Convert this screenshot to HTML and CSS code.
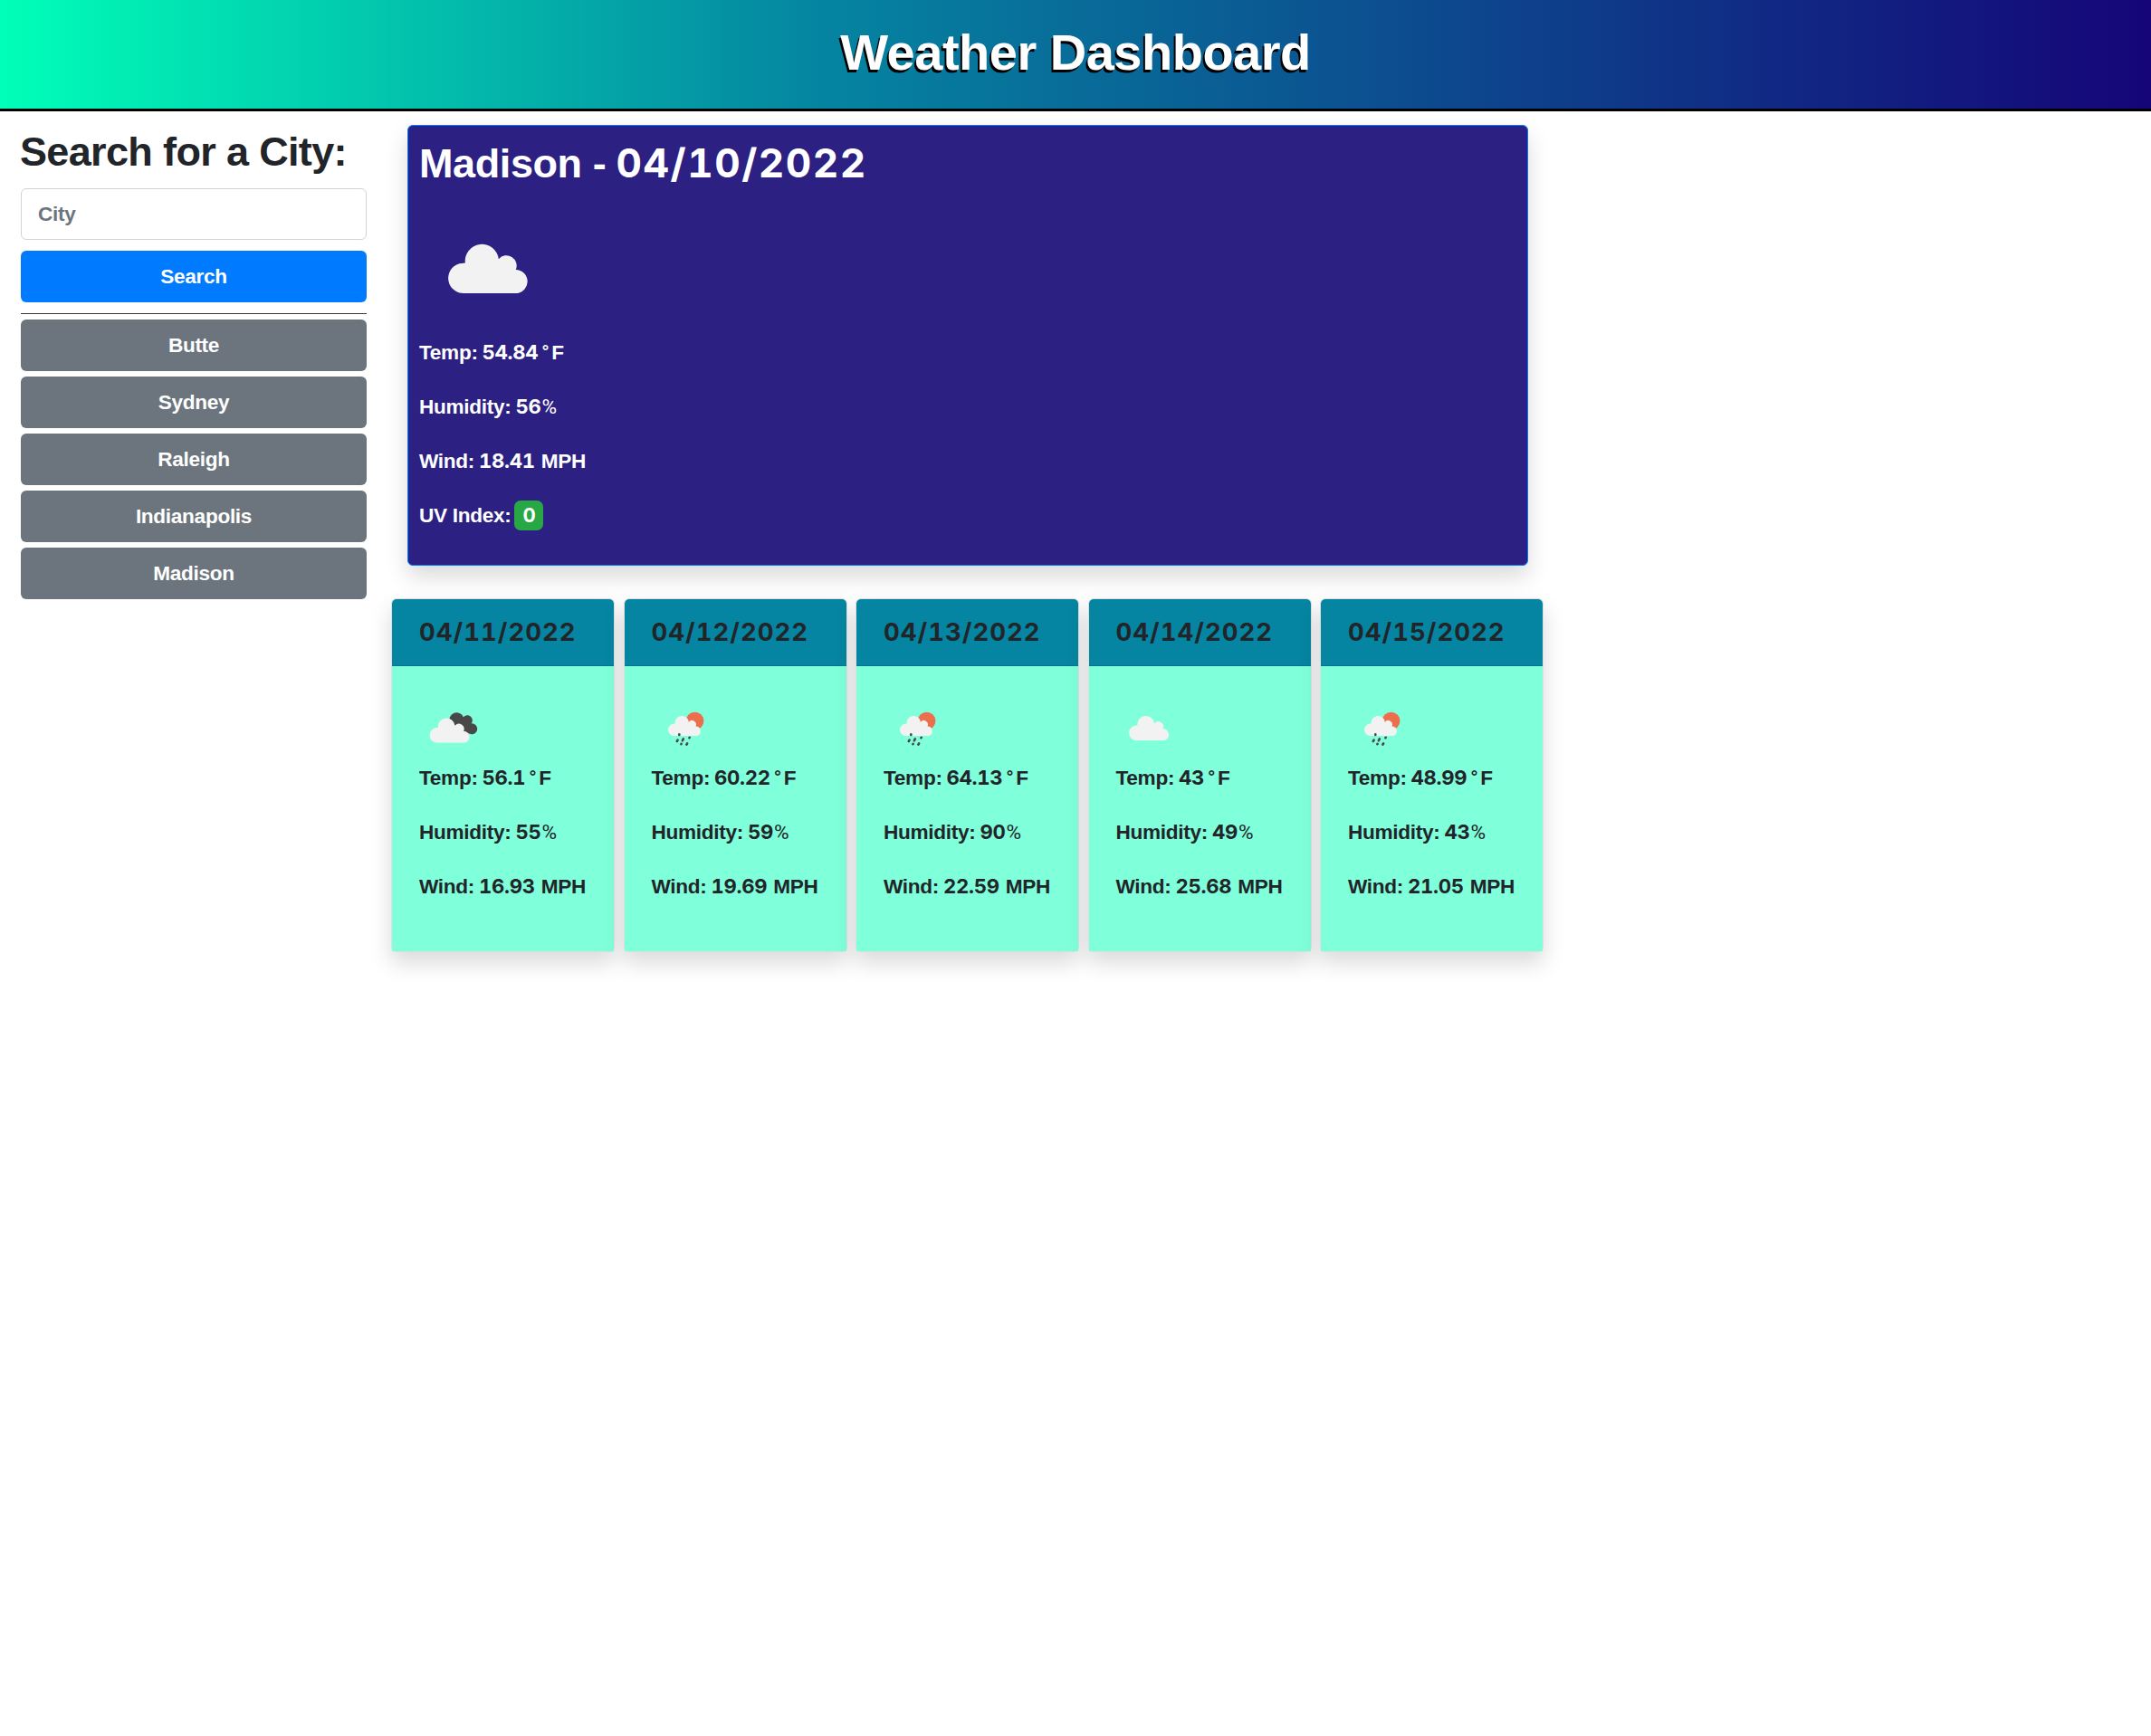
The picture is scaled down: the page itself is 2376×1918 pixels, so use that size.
FILE: index.html
```html
<!DOCTYPE html>
<html lang="en">
<head>
<meta charset="utf-8">
<title>Weather Dashboard</title>
<link rel="stylesheet" href="styles.css">
</head>
<body>
<svg class="defs" width="0" height="0" aria-hidden="true">
  <symbol id="cloud" viewBox="0 0 89 55.5">
    <path d="M16.5 55.5A16.5 16.5 0 0 1 16.5 22.5L18.6 22.4A18.4 18.4 0 1 1 55.2 18A11.2 11.2 0 0 1 74 29.7A13 13 0 0 1 76 55.5Z"/>
  </symbol>
  <symbol id="broken" viewBox="0 0 75 75">
    <path fill="#484848" d="M34 31A7.6 7.6 0 0 1 48.8 25.3A5.4 5.4 0 0 1 57.6 32.4A5.9 5.9 0 1 1 57 44L50 42Z"/>
    <use href="#cloud" x="11.5" y="25.6" width="45.3" height="28.2"/>
  </symbol>
  <symbol id="rain" viewBox="0 0 75 75">
    <circle cx="47.6" cy="29.5" r="9.8" fill="#ec6e4c"/>
    <path d="M54 40h8v-4h-4z" fill="#80ffdb"/>
    <use href="#cloud" x="18" y="23.2" width="36.8" height="22.9"/>
    <g stroke="#484848" stroke-width="2.6" stroke-linecap="round">
      <path d="M30.3 44.4v.6M28.6 50.6l-.8 1.4M34.8 49.4l-.9 1.9M41.7 47.8l-.3.4M32.6 54.8l-.2.3M39.1 54.3l-.7 1.4"/>
    </g>
  </symbol>
</svg>
<header class="banner"><h1>Weather Dashboard</h1></header>
<div class="layout">
  <aside class="sidebar">
    <h2>Search for a City:</h2>
    <input class="field" type="text" placeholder="City">
    <button class="btn primary">Search</button>
    <div class="history">
      <button class="btn">Butte</button>
      <button class="btn">Sydney</button>
      <button class="btn">Raleigh</button>
      <button class="btn">Indianapolis</button>
      <button class="btn">Madison</button>
    </div>
  </aside>
  <main>
    <section class="today">
      <h2>Madison - <span class="n">04/10/2022</span></h2>
      <div class="icon"><svg class="big"><use href="#cloud"/></svg></div>
      <p>Temp: <span class="n">54.84</span><span class="deg">°</span>F</p>
      <p>Humidity: <span class="n">56</span><span class="pct">%</span></p>
      <p>Wind: <span class="n">18.41</span> MPH</p>
      <p>UV Index: <span class="badge n">0</span></p>
    </section>
    <section class="forecast">
      <article class="day">
        <h3>04/11/2022</h3>
        <div class="body">
          <div class="icon"><svg class="full"><use href="#broken"/></svg></div>
          <p>Temp: <span class="n">56.1</span><span class="deg">°</span>F</p>
          <p>Humidity: <span class="n">55</span><span class="pct">%</span></p>
          <p>Wind: <span class="n">16.93</span> MPH</p>
        </div>
      </article>
      <article class="day">
        <h3>04/12/2022</h3>
        <div class="body">
          <div class="icon"><svg class="full"><use href="#rain"/></svg></div>
          <p>Temp: <span class="n">60.22</span><span class="deg">°</span>F</p>
          <p>Humidity: <span class="n">59</span><span class="pct">%</span></p>
          <p>Wind: <span class="n">19.69</span> MPH</p>
        </div>
      </article>
      <article class="day">
        <h3>04/13/2022</h3>
        <div class="body">
          <div class="icon"><svg class="full"><use href="#rain"/></svg></div>
          <p>Temp: <span class="n">64.13</span><span class="deg">°</span>F</p>
          <p>Humidity: <span class="n">90</span><span class="pct">%</span></p>
          <p>Wind: <span class="n">22.59</span> MPH</p>
        </div>
      </article>
      <article class="day">
        <h3>04/14/2022</h3>
        <div class="body">
          <div class="icon"><svg class="small"><use href="#cloud"/></svg></div>
          <p>Temp: <span class="n">43</span><span class="deg">°</span>F</p>
          <p>Humidity: <span class="n">49</span><span class="pct">%</span></p>
          <p>Wind: <span class="n">25.68</span> MPH</p>
        </div>
      </article>
      <article class="day">
        <h3>04/15/2022</h3>
        <div class="body">
          <div class="icon"><svg class="full"><use href="#rain"/></svg></div>
          <p>Temp: <span class="n">48.99</span><span class="deg">°</span>F</p>
          <p>Humidity: <span class="n">43</span><span class="pct">%</span></p>
          <p>Wind: <span class="n">21.05</span> MPH</p>
        </div>
      </article>
    </section>
  </main>
</div>
</body>
</html>
```
FILE: styles.css
```css
* { box-sizing: border-box; }
body {
  min-height: 100vh;
  margin: 0;
  background: #fff;
  color: #212529;
  font: bold 22.6px/36px "Liberation Sans", Arial, sans-serif;
  letter-spacing: -.3px;
}
h1, h2, h3, p { margin: 0; }
.defs { position: absolute; }
svg { display: block; fill: #f2f2f2; }

.banner {
  height: 123px;
  padding-top: 22px;
  border-bottom: 3px solid #000;
  background: linear-gradient(90deg, #00ffb8 0%, #0585a1 38%, #150578 100%);
  text-align: center;
}
h1 {
  color: #fff;
  font-size: 56px;
  line-height: 72px;
  letter-spacing: -.5px;
  text-shadow: -2px 3px 0 #000;
}

.layout { display: flex; align-items: flex-start; }
.sidebar { display: flex; flex-direction: column; width: 405px; padding: 16px 0 0 23px; }
h2 { font-size: 45px; line-height: 58px; letter-spacing: -.65px; white-space: nowrap; }
.sidebar h2 { margin-left: -1px; }
.field {
  height: 57px;
  margin: 11px 0 12px;
  padding: 0 18px;
  border: 1px solid #ced4da;
  border-radius: 6px;
  font: inherit;
  letter-spacing: inherit;
}
.field::placeholder { color: #6c757d; opacity: 1; }
.btn {
  height: 57px;
  padding: 0;
  border: 0;
  border-radius: 6px;
  background: #6c757d;
  color: #fff;
  font: inherit;
  letter-spacing: inherit;
}
.primary { background: #007bff; }
.history {
  display: flex;
  flex-direction: column;
  gap: 6px;
  margin-top: 12px;
  padding-top: 6px;
  border-top: 1px solid #343a40;
}

main { width: 1273px; margin: 15px 0 0 27px; }
.today {
  height: 487px;
  margin: 0 17px 0 18px;
  padding: 13px 12px;
  border: 1px solid #007bff;
  border-radius: 6px;
  background: #2c2083;
  color: #fff;
  box-shadow: 0 12px 24px rgba(0, 0, 0, .15);
}
.today h2 { height: 70px; letter-spacing: -.4px; }
.today h2 .n { letter-spacing: 1.5px; }
p { margin-bottom: 24px; white-space: nowrap; }
.n {
  margin: 0 1px 0 -1px;
  font-family: Inter, sans-serif;
  font-size: .98em;
  line-height: 0;
  font-feature-settings: "tnum";
}
.deg, .pct { font-family: Roboto, sans-serif; font-weight: 400; line-height: 0; }
.deg { display: inline-block; width: 14px; font-size: 24px; text-align: center; vertical-align: -1px; }
.icon { display: grid; place-items: center; width: 75px; height: 75px; }
.today .icon { width: 154px; height: 148px; margin-bottom: 2px; }
.big { width: 90px; height: 56px; }
.small { width: 45.3px; height: 28.2px; }
.full { width: 75px; height: 75px; }
.badge {
  display: inline-block;
  width: 32px;
  height: 33px;
  margin-left: -2px;
  border-radius: 7px;
  background: #28a745;
  line-height: 33px;
  text-align: center;
}

.forecast { display: grid; grid-template-columns: repeat(5, 1fr); gap: 9.5px; margin-top: 36px; }
.day {
  display: flex;
  flex-direction: column;
  height: 391px;
  border: 1px solid rgba(0, 0, 0, .125);
  border-radius: 6px;
  background: #fff;
  box-shadow: 0 12px 24px rgba(0, 0, 0, .15);
}
h3 {
  height: 74px;
  padding-left: 30px;
  border-bottom: 1px solid #04748d;
  border-radius: 5px 5px 0 0;
  background: #0585a1;
  font: bold 27.5px/72px Inter, sans-serif;
  letter-spacing: 1px;
  font-feature-settings: "tnum";
}
.body { flex: 1; padding: 31px 30px 0; background: #80ffdb; }
```
